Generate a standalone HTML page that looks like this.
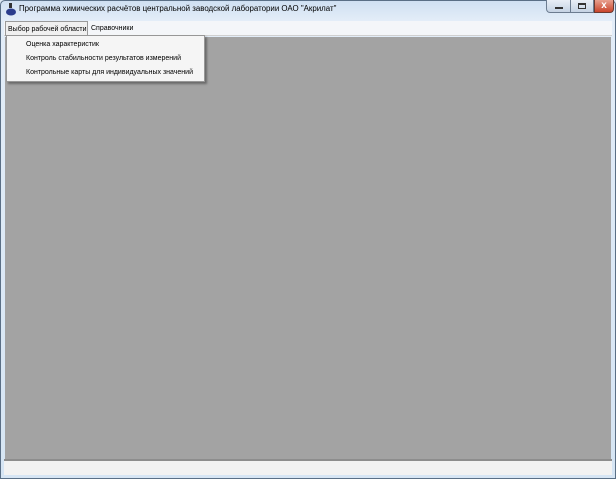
<!DOCTYPE html>
<html><head><style>
*{margin:0;padding:0;box-sizing:border-box}
body{width:616px;height:479px;overflow:hidden;background:#dbe7f3;font-family:"Liberation Sans",sans-serif;position:relative}
.frame{position:absolute;left:0;top:0;width:616px;height:479px;background:linear-gradient(#cfe0f2,#e3edf8 20px,#d6e5f4);border:1px solid #5a6f86;border-radius:5px 5px 0 0}
.title{position:absolute;left:19px;top:4px;font-size:7.9px;color:#000;white-space:nowrap}
.menubar{position:absolute;left:4px;top:21px;width:608px;height:15px;background:#f4f6f9;border-bottom:1px solid #d0d0d0}
.mi{position:absolute;top:21px;height:15px;font-size:7px;line-height:15px;padding:0 2px;white-space:nowrap}
.client{position:absolute;left:5px;top:37px;width:606px;height:422px;background:#a3a3a3}
.status{position:absolute;left:4px;top:459px;width:608px;height:16px;background:#f2f2f2;border-top:2px solid #8d8d8d}
.dd{position:absolute;left:6px;top:35px;width:199px;height:47px;background:#f5f5f5;border:1px solid #979797;box-shadow:2px 2px 2px rgba(0,0,0,.35)}
.dd div{position:absolute;left:19px;font-size:7px;white-space:nowrap}
</style></head><body>
<div class="frame"></div>
<svg style="position:absolute;left:5px;top:3px" width="12" height="13"><rect x="4" y="0" width="3" height="5" fill="#333"/><ellipse cx="6" cy="9" rx="5" ry="3.5" fill="#2a3c8c"/></svg>
<div class="title">Программа химических расчётов центральной заводской лаборатории ОАО "Акрилат"</div>
<div style="position:absolute;left:546px;top:0;width:25px;height:13px;background:linear-gradient(#e8eef6,#c5d3e4);border:1px solid #6c7c90;border-top:none;border-radius:0 0 0 4px"><div style="position:absolute;left:8px;top:7px;width:8px;height:2px;background:#333"></div></div>
<div style="position:absolute;left:571px;top:0;width:23px;height:13px;background:linear-gradient(#e8eef6,#c5d3e4);border:1px solid #6c7c90;border-top:none;border-left:none"><div style="position:absolute;left:7px;top:3px;width:8px;height:6px;border:1px solid #333;border-top-width:2px"></div></div>
<div style="position:absolute;left:594px;top:0;width:20px;height:13px;background:linear-gradient(#e8a08e,#c9452c);border:1px solid #6c3a30;border-top:none;border-radius:0 0 4px 0;color:#fff;font-size:10px;font-weight:bold;text-align:center;line-height:11px">x</div>
<div class="menubar"></div>
<div class="mi" style="left:5px;width:83px;background:#f0f0f0;border:1px solid #9a9a9a;border-bottom:none">Выбор рабочей области</div>
<div class="mi" style="left:89px">Справочники</div>
<div class="client"></div>
<div class="dd">
<div style="top:5px">Оценка характеристик</div>
<div style="top:19px">Контроль стабильности результатов измерений</div>
<div style="top:33px">Контрольные карты для индивидуальных значений</div>
</div>
<div class="status"></div>
</body></html>
